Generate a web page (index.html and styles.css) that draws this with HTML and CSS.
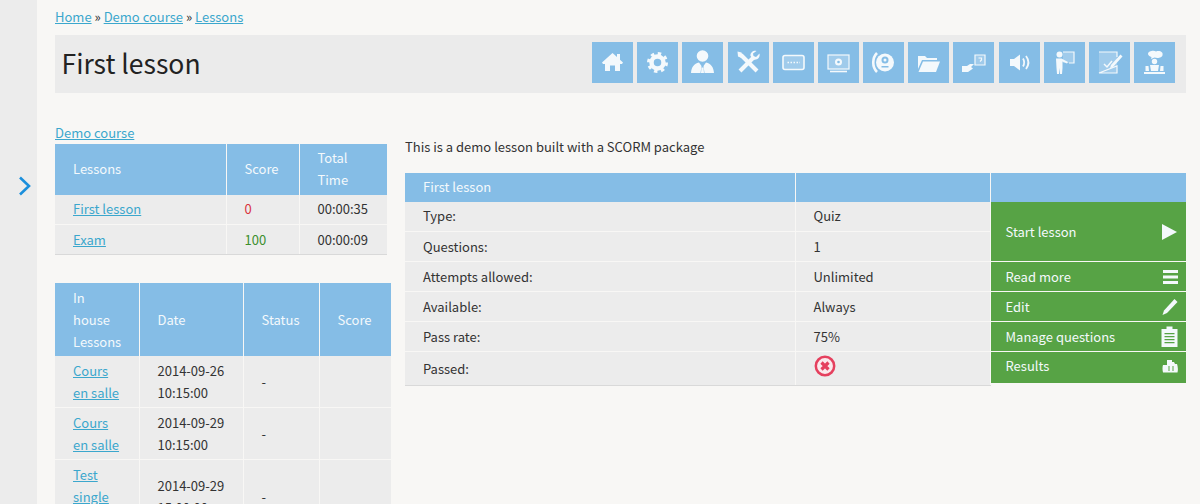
FILE: index.html
```html
<!DOCTYPE html>
<html lang="en">
<head>
    <meta charset="UTF-8">
    <title>First lesson</title>
    <link rel="stylesheet" href="styles.css">
</head>
<body>
    <aside class="sidebar">
        <svg class="sidebar-toggle" width="14" height="20" viewBox="0 0 14 20"><path d="M2 1.500 L11 10 L2 18.500" /></svg>
    </aside>
    <main class="page">
        <div class="breadcrumbs"><a href="#">Home</a> » <a href="#">Demo course</a> » <a href="#">Lessons</a></div>
        <header class="title-bar">
            <h1>First lesson</h1>
            <nav class="tools">
                <a class="tool" href="#"><svg viewBox="0 0 41 41"><path d="M20.500 11 L25 15 V12 H28 V17.700 L31 20.500 L30 22 H28 V29 H23 V23.500 H18 V29 H13 V22 H11 L10 20.500 Z"/></svg></a>
                <a class="tool" href="#"><svg viewBox="0 0 41 41"><circle class="line" cx="20.500" cy="20.500" r="6" stroke-width="4.500"/><circle class="line" cx="20.500" cy="20.500" r="9" stroke-width="3" stroke-dasharray="3.400 3.670"/></svg></a>
                <a class="tool" href="#"><svg viewBox="0 0 41 41"><circle cx="20.500" cy="14" r="5.800"/><path d="M9 31 C9.500 25 12 21.500 17 20.500 L19.500 24 L18.500 31 Z M32 31 C31.500 25 29 21.500 24 20.500 L21.500 24 L22.500 31 Z M19.500 25.500 H21.500 L22 31 H19 Z"/></svg></a>
                <a class="tool" href="#"><svg viewBox="0 0 41 41"><path class="line" stroke-width="4" d="M13 13 L29 29"/><path d="M9.500 9.500 L13.500 10.500 L15 14.500 L13.500 16 L10 14.500 Z"/><path class="line" stroke-width="4" d="M12 29 L26 15"/><path d="M31.500 11.500 L28 15 L25.500 14 L25 11.500 L28.500 9 C26 8 22 10 22.500 14 L25.500 17.500 C29 18.500 32.500 15.500 31.500 11.500 Z"/></svg></a>
                <a class="tool" href="#"><svg viewBox="0 0 41 41"><rect class="faded" x="10" y="13.500" width="21" height="14" rx="2"/><rect class="line thick" x="10" y="13.500" width="21" height="14" rx="2"/><path class="line dots" d="M14.500 20.500 H27"/></svg></a>
                <a class="tool" href="#"><svg viewBox="0 0 41 41"><rect class="faded" x="10" y="13" width="21" height="14"/><rect class="line thin" x="10" y="13" width="21" height="14"/><circle cx="20.500" cy="20" r="3.500"/><circle class="hole" cx="20.500" cy="20" r="1.300"/><path class="line thick" d="M12 29.500 H29"/></svg></a>
                <a class="tool" href="#"><svg viewBox="0 0 41 41"><path class="line" stroke-width="2.600" d="M14 11 C9 16 9 25 14 30"/><circle cx="22" cy="20.500" r="9"/><circle class="hole" cx="22" cy="18" r="3.500"/><circle cx="22" cy="18" r="1.500"/><path class="hole" d="M18.500 24 H25.500 V25.500 H18.500 Z"/></svg></a>
                <a class="tool" href="#"><svg viewBox="0 0 41 41"><path d="M10 14 H17 L19 16 H29 V18 H14 L10 27 Z"/><path d="M15 19.500 H32 L28 30 H10.500 Z"/></svg></a>
                <a class="tool" href="#"><svg viewBox="0 0 41 41"><rect class="faded" x="22" y="13" width="10" height="10"/><path class="line thin" d="M22 13 H32 V23 H22 Z"/><path class="line thin" d="M25.500 16 H28.500 V18 L27 19.500"/><path d="M9 24 H14 L17 22 L21 22 L18 25 L20 26.500 L15 30 H9 Z"/></svg></a>
                <a class="tool" href="#"><svg viewBox="0 0 41 41"><path d="M11 17 H15 L21 12.500 V28.500 L15 24 H11 Z"/><path class="line" stroke-width="1.800" d="M24 16.500 C25.500 19 25.500 22 24 24.500 M27 14 C30 18 30 23 27 27"/></svg></a>
                <a class="tool" href="#"><svg viewBox="0 0 41 41"><rect class="faded" x="19" y="10" width="11" height="11"/><circle cx="15.500" cy="12.500" r="3"/><path d="M12 16.500 H17.500 L24 20 L23 21.500 L18.500 19.500 V26 L18 32 H16 L15.500 26 L15 32 H13 L12.500 26 Z"/><path class="line thin" d="M19 10 H30 V21 H25"/></svg></a>
                <a class="tool" href="#"><svg viewBox="0 0 41 41"><rect class="faded" x="10" y="10" width="18" height="21"/><path class="line thin" d="M10 10 H28 V15 M28 24 V31 H10 Z"/><path class="line" stroke-width="1.500" d="M15 22 L18 25 L23 19"/><path d="M31.500 12.500 L33.500 14.500 L24 25 L21 26.500 L22 23 Z"/></svg></a>
                <a class="tool" href="#"><svg viewBox="0 0 41 41"><path d="M14 12 C14 9 20 8 22 9.500 C26 8 29.500 10.500 28.500 13 C28.500 16 23 16.500 20.500 15.500 L17 17 L17.500 15 C15.500 14.500 14 13 14 12 Z"/><circle cx="20.500" cy="19.500" r="2.700"/><path d="M16 23 H25 L24 29 H17 Z M11.500 24 H14.500 L15 29 H11.500 Z M26.500 24 H29.500 V29 H26 Z M10 30 H31 V32 H10 Z"/></svg></a>
            </nav>
        </header>

        <div class="columns">
            <section class="left-col">
                <a href="#">Demo course</a>
                <table class="grid lessons">
                    <tr class="head"><th class="c-name">Lessons</th><th class="c-score">Score</th><th class="c-time">Total Time</th></tr>
                    <tr><td><a href="#">First lesson</a></td><td class="failed">0</td><td>00:00:35</td></tr>
                    <tr class="closing"><td><a href="#">Exam</a></td><td class="ok">100</td><td>00:00:09</td></tr>
                </table>
                <table class="grid inhouse">
                    <tr class="head"><th class="c-in">In house Lessons</th><th class="c-date">Date</th><th class="c-status">Status</th><th class="c-inscore">Score</th></tr>
                    <tr><td><a href="#">Cours en salle</a></td><td>2014-09-26 10:15:00</td><td>-</td><td></td></tr>
                    <tr><td><a href="#">Cours en salle</a></td><td>2014-09-29 10:15:00</td><td>-</td><td></td></tr>
                    <tr><td><a href="#">Test single session</a></td><td>2014-09-29 15:00:00</td><td>-</td><td></td></tr>
                </table>
            </section>

            <section class="right-col">
                <p class="intro">This is a demo lesson built with a SCORM package</p>
                <table class="grid details">
                    <tr class="head"><th class="c-label">First lesson</th><th class="c-value"></th><th class="c-action"></th></tr>
                    <tr><td>Type:</td><td>Quiz</td>
                        <td class="action" rowspan="2"><a href="#">Start lesson <svg width="18" height="18" viewBox="0 0 18 18"><path d="M2 1 L17 9 L2 17 Z"/></svg></a></td></tr>
                    <tr><td>Questions:</td><td>1</td></tr>
                    <tr><td>Attempts allowed:</td><td>Unlimited</td>
                        <td class="action"><a href="#">Read more <svg width="15" height="16" viewBox="0 0 15 16"><path d="M0 1 H15 V4 H0 Z M0 6.500 H15 V9.500 H0 Z M0 12 H15 V15 H0 Z"/></svg></a></td></tr>
                    <tr><td>Available:</td><td>Always</td>
                        <td class="action"><a href="#">Edit <svg width="16" height="18" viewBox="0 0 16 18"><path d="M12.500 1 L15.500 4 L5 15 L0.500 17 L2 12.500 Z"/></svg></a></td></tr>
                    <tr><td>Pass rate:</td><td>75%</td>
                        <td class="action"><a href="#">Manage questions <svg width="17" height="21" viewBox="0 0 17 21"><path fill-rule="evenodd" d="M0.500 3 H5.500 V0.500 H11.500 V3 H16.500 V21 H0.500 Z M3.500 7 V8.200 H13.500 V7 Z M3.500 10 V11.200 H13.500 V10 Z M3.500 13 V14.200 H13.500 V13 Z M3.500 16 V17.200 H13.500 V16 Z"/></svg></a></td></tr>
                    <tr class="closing"><td>Passed:</td>
                        <td><svg class="cross" width="22" height="22" viewBox="0 0 22 22"><circle cx="11" cy="11" r="9.200" /><path d="M7.500 7.500 L14.500 14.500 M14.500 7.500 L7.500 14.500"/></svg></td>
                        <td class="action"><a href="#">Results <svg width="16" height="14" viewBox="0 0 16 14"><path fill-rule="evenodd" d="M5 1 H10 V3 H12 L13 5 H15 Q16.500 9 15.500 13.500 H1 Q0 9 1 6 H5 Z M6.500 7 V12 H7.500 V7 Z M10.500 7 V12 H11.500 V7 Z"/></svg></a></td></tr>
                </table>
            </section>
        </div>
    </main>
</body>
</html>
```

FILE: styles.css
```css
* {
    margin: 0;
    padding: 0;
    box-sizing: border-box;
}

html, body {
    height: 504px;
    overflow: hidden;
}

body {
    display: flex;
    font-family: "Noto Sans CJK JP", "Noto Sans", sans-serif;
    font-size: 13px;
    line-height: 22px;
    color: #333;
    background-color: #f8f7f5;
}

a {
    color: #3ba7cd;
}

/* Sidebar */
.sidebar {
    flex: 0 0 37px;
    background: #ececec;
    padding: 176px 0 0 18px;
}

.sidebar-toggle path {
    fill: none;
    stroke: #1b8fdc;
    stroke-width: 2.600;
}

.page {
    flex: 1;
    padding: 6px 14px 0 18px;
    min-width: 0;
}

/* Title bar */
.title-bar {
    display: flex;
    justify-content: space-between;
    align-items: center;
    height: 58px;
    margin-top: 7px;
    padding: 0 11px 0 6.500px;
    background: #ebebeb;
}

h1 {
    font-size: 26.500px;
    font-weight: 400;
    color: #222;
    padding-bottom: 2px;
}

.tools {
    display: flex;
    gap: 4.170px;
    margin-bottom: 3px;
}

.tool {
    display: block;
    width: 41px;
    height: 41px;
    background: #85bde6;
}

.tool svg {
    display: block;
    fill: #f4f9fc;
}

.tool .line {
    fill: none;
    stroke: #f4f9fc;
}

.tool .thin {
    stroke-width: 1.200;
}

.tool .thick {
    stroke-width: 1.600;
}

.tool .dots {
    stroke-width: 1.300;
    stroke-dasharray: 1.500 1.500;
}

.tool .faded {
    fill: #f4f9fc;
    opacity: 0.250;
}

.tool .hole {
    fill: #85bde6;
}

/* Columns */
.columns {
    display: flex;
    gap: 18px;
    margin-top: 29px;
}

.left-col {
    flex: 0 0 332px;
    min-width: 0;
}

.right-col {
    flex: 0 0 781px;
    padding-top: 14px;
}

.intro {
    margin-bottom: 15px;
}

/* Tables */
.grid {
    border-collapse: collapse;
    table-layout: fixed;
    width: 100%;
}

.grid th, .grid td {
    padding: 3px 18px 4px;
    border: 1px solid #f8f7f5;
    border-top: 0;
    text-align: left;
    font-weight: 400;
    background: #ececec;
}

.grid tr > :first-child {
    border-left: 0;
}

.grid tr > :last-child {
    border-right: 0;
}

.grid .head th {
    background: #85bde6;
    color: #f4f9fc;
    border-bottom: 0;
}

.grid .closing td {
    border-bottom: 1px solid #d9d9d9;
}

.lessons {
    margin-bottom: 28px;
}

.lessons .closing td {
    padding: 4px 18px 3px;
}

.c-name { width: 171px; }
.c-score { width: 73px; }
.c-time { width: 88px; }

.inhouse {
    width: 336px;
}

.inhouse th, .inhouse td {
    padding: 4px 18px 3px;
}

.c-in { width: 84px; }
.c-date { width: 104px; }
.c-status { width: 76px; }
.c-inscore { width: 72px; }

.failed {
    color: #d9343f;
}

.ok {
    color: #3c8f2e;
}

.c-label { width: 390px; }
.c-value { width: 195px; }
.c-action { width: 196px; }

.details tr + tr + tr td {
    padding: 4px 18px 3px;
}

.details td.action {
    padding: 0;
    background: #57a345;
    border-bottom: 1px solid #f8f7f5;
}

.action a {
    display: flex;
    justify-content: space-between;
    align-items: center;
    padding: 0 8px 0 15px;
    color: #f4f9fc;
    text-decoration: none;
}

.action svg {
    fill: #f4f9fc;
}

/* last button is shorter than its row */
.details .closing td.action {
    background: none;
    border-bottom: 0;
    vertical-align: top;
}

.closing .action a {
    padding-top: 3px;
    padding-bottom: 6px;
    background: #57a345;
}

.cross {
    display: block;
    margin: -1px 0 5px;
}

.cross circle {
    fill: #fbe9ec;
    stroke: #e5405e;
    stroke-width: 2.500;
}

.cross path {
    fill: none;
    stroke: #e5405e;
    stroke-width: 3.200;
}
```
